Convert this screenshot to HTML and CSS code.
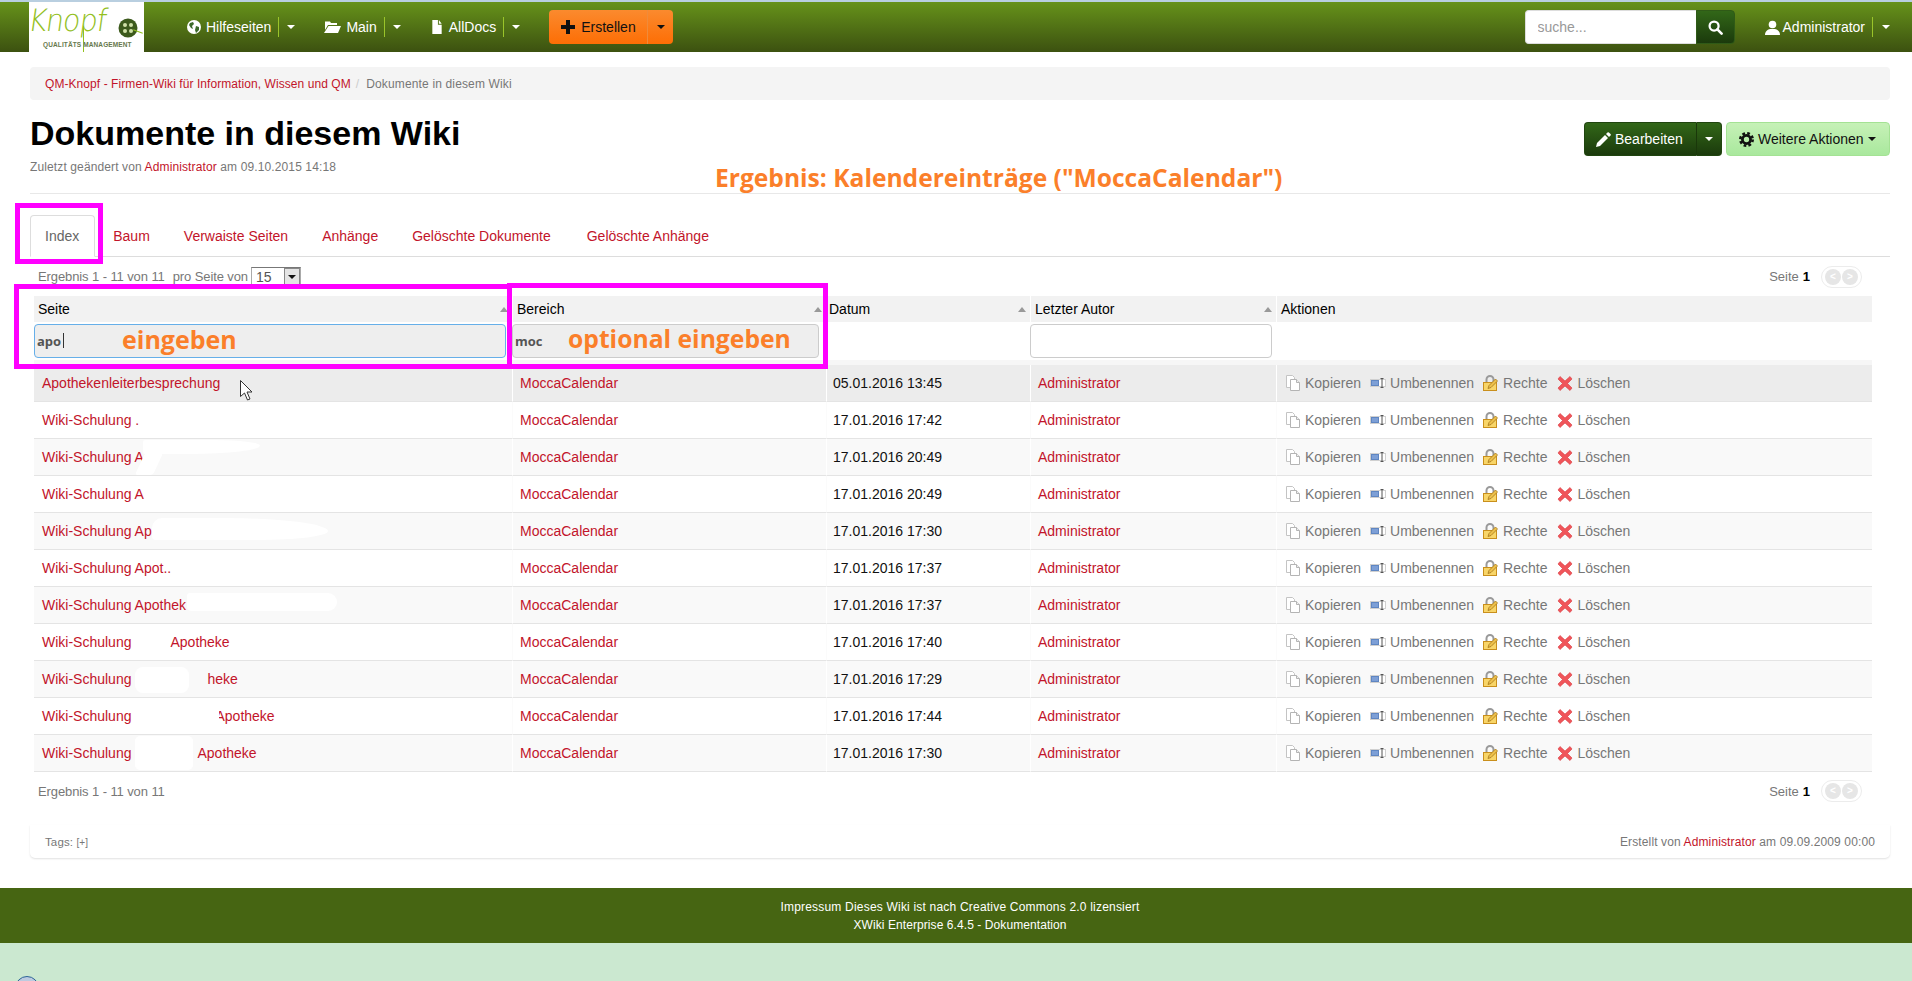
FILE: index.html
```html
<!DOCTYPE html>
<html lang="de">
<head>
<meta charset="utf-8">
<title>Dokumente in diesem Wiki</title>
<link rel="stylesheet" href="styles.css">
</head>
<body>
<svg class="sprite" aria-hidden="true">
  <symbol id="i-copy" viewBox="0 0 16 16"><path d="M1.500.5h6l2 2v10h-8z" fill="#fff" stroke="#c4c4c4"/><path d="M5.500 4.500h6l3 3v8h-9z" fill="#fff" stroke="#b4b4b4"/><path d="M11.500 4.500v3h3" fill="#eee" stroke="#b4b4b4"/></symbol>
  <symbol id="i-rename" viewBox="0 0 16 16"><rect x=".5" y="4.500" width="15" height="7" fill="#fff" stroke="#d0d0d0"/><rect x="1.500" y="5.500" width="7" height="5" fill="#7d9fd6" stroke="#5f86c2"/><path d="M10.500 3.500h3M12 3.500v9M10.500 12.500h3" fill="none" stroke="#555"/></symbol>
  <symbol id="i-lock" viewBox="0 0 16 16"><path d="M3.500 8V4.500a3.500 3.500 0 0 1 7 0V8" fill="none" stroke="#9a9a9a" stroke-width="2"/><rect x=".5" y="7.500" width="13" height="8" fill="#f8d568" stroke="#c98f1c"/><path d="M5 13.500l1-3 6.500-6.500 2 2-6.500 6.500z" fill="#edc04a" stroke="#a4761a" stroke-width=".8"/></symbol>
  <symbol id="i-cross" viewBox="0 0 16 16"><path d="M3 1.500L8 6l5-4.500 2 2.500-4.500 4.500 4.500 4.500-2 2.500L8 11l-5 4.500L1 13l4.500-4.500L1 4z" fill="#f0555a" stroke="#d93a3f" stroke-width=".6"/></symbol>
</svg>

<header class="topbar">
  <a class="logo">
    <span class="logo-word">Knopf</span>
    <svg class="logo-button" viewBox="0 0 20 20"><circle cx="10" cy="10" r="9.500" fill="#3c5a1c"/><circle cx="7" cy="7" r="2" fill="#cfe0a8"/><circle cx="13" cy="7" r="2" fill="#cfe0a8"/><circle cx="7" cy="13" r="2" fill="#cfe0a8"/><circle cx="13" cy="13" r="2" fill="#cfe0a8"/></svg>
    <span class="logo-sub">QUALITÄTS MANAGEMENT</span>
  </a>
  <nav class="nav">
    <a class="nav-item">
      <svg class="nav-ic" viewBox="0 0 14 14"><circle cx="7" cy="7" r="7" fill="#fff"/><path d="M3 3l3-1 1 2-2 2 1 3-2-1-2-3zM9 6l3 1 0 3-3 3-1-3z" fill="#3c6a2a"/></svg>
      <span>Hilfeseiten</span><i class="nav-div"></i><i class="caret"></i>
    </a>
    <a class="nav-item">
      <svg class="nav-ic nav-ic-wide" viewBox="0 0 17 14"><path d="M1 3V1.500h5l1 1.500h6v2H4L1 10z" fill="#fff"/><path d="M4.500 6H17l-3 7H0z" fill="#fff"/></svg>
      <span>Main</span><i class="nav-div"></i><i class="caret"></i>
    </a>
    <a class="nav-item">
      <svg class="nav-ic" viewBox="0 0 14 15"><path d="M2 0h6v5h4v10H2z" fill="#fff"/><path d="M9 0l3 4H9z" fill="#fff"/></svg>
      <span>AllDocs</span><i class="nav-div"></i><i class="caret"></i>
    </a>
  </nav>
  <div class="create">
    <a class="create-main"><svg class="plus" viewBox="0 0 14 14"><path d="M5 0h4v5h5v4H9v5H5V9H0V5h5z" fill="#111"/></svg>Erstellen</a>
    <a class="create-drop"><i class="caret caret-dark"></i></a>
  </div>
  <form class="search">
    <input class="search-input" type="text" placeholder="suche...">
    <button class="search-btn" type="button"><svg viewBox="0 0 16 16" class="search-ic"><circle cx="6.500" cy="6.500" r="4.800" fill="none" stroke="#fff" stroke-width="2.400"/><path d="M10 10l4.500 4.500" stroke="#fff" stroke-width="2.800" stroke-linecap="round"/></svg></button>
  </form>
  <a class="user">
    <svg class="nav-ic" viewBox="0 0 15 15"><circle cx="7.500" cy="4.500" r="3.800" fill="#fff"/><path d="M0 15c0-4 3-5.500 5-6h5c2 .5 5 2 5 6z" fill="#fff"/></svg>
    <span>Administrator</span><i class="nav-div"></i><i class="caret"></i>
  </a>
</header>

<main class="page">
  <ol class="crumbs">
    <li><a class="lnk">QM-Knopf - Firmen-Wiki für Information, Wissen und QM</a></li>
    <li class="crumb-sep">/</li>
    <li class="crumb-here">Dokumente in diesem Wiki</li>
  </ol>

  <section class="head">
    <div>
      <h1>Dokumente in diesem Wiki</h1>
      <p class="meta">Zuletzt geändert von <a class="lnk">Administrator</a> am 09.10.2015 14:18</p>
    </div>
    <div class="actions">
      <div class="edit-group">
        <a class="btn-dark btn-edit"><svg class="btn-ic" viewBox="0 0 15 15"><path d="M0 15l1-4 8-8 3 3-8 8z" fill="#fff"/><path d="M10 2l1.500-1.500a1 1 0 0 1 1.400 0l1.600 1.600a1 1 0 0 1 0 1.400L13 5z" fill="#fff"/></svg>Bearbeiten</a>
        <a class="btn-dark btn-drop"><i class="caret"></i></a>
      </div>
      <a class="btn-light"><svg class="btn-ic" viewBox="0 0 14 14"><circle cx="7" cy="7" r="3.800" fill="none" stroke="#111" stroke-width="2.600"/><circle cx="7" cy="7" r="5.800" fill="none" stroke="#111" stroke-width="2.400" stroke-dasharray="2.500 2.050"/></svg>Weitere Aktionen<i class="caret caret-dark caret-small"></i></a>
    </div>
  </section>

  <ul class="tabs">
    <li class="tab tab-on">Index</li>
    <li class="tab lnk">Baum</li>
    <li class="tab lnk">Verwaiste Seiten</li>
    <li class="tab lnk">Anhänge</li>
    <li class="tab lnk">Gelöschte Dokumente</li>
    <li class="tab lnk">Gelöschte Anhänge</li>
  </ul>

  <div class="pager pager-top">
    <div class="pager-l"><span>Ergebnis 1 - 11 von 11</span><span class="per">pro Seite von</span>
      <span class="sel"><span class="sel-v">15</span><span class="sel-b"><i class="caret caret-dark caret-small"></i></span></span>
    </div>
    <div class="pager-r">Seite <b>1</b>
      <span class="pgb"><span class="pgc">&lt;</span><span class="pgc">&gt;</span></span>
    </div>
  </div>

  <table class="grid">
    <colgroup><col class="c1"><col class="c2"><col class="c3"><col class="c4"><col class="c5"></colgroup>
    <thead>
      <tr class="hrow">
        <th>Seite<i class="sort"></i></th>
        <th>Bereich<i class="sort"></i></th>
        <th>Datum<i class="sort"></i></th>
        <th>Letzter Autor<i class="sort"></i></th>
        <th>Aktionen</th>
      </tr>
      <tr class="frow">
        <td><input class="fi fi-focus" type="text" value="apo"></td>
        <td><input class="fi fi-grey" type="text" value="moc"></td>
        <td></td>
        <td><input class="fi" type="text"></td>
        <td></td>
      </tr>
    </thead>
    <tbody>
      <tr class="row-hover">
        <td><a class="lnk">Apothekenleiterbesprechung</a></td><td><a class="lnk">MoccaCalendar</a></td><td>05.01.2016 13:45</td><td><a class="lnk">Administrator</a></td>
        <td class="acts"><span class="act a1"><svg class="ic"><use href="#i-copy"/></svg>Kopieren</span><span class="act a2"><svg class="ic"><use href="#i-rename"/></svg>Umbenennen</span><span class="act a3"><svg class="ic"><use href="#i-lock"/></svg>Rechte</span><span class="act"><svg class="ic"><use href="#i-cross"/></svg>Löschen</span></td>
      </tr>
      <tr>
        <td><a class="lnk">Wiki-Schulung .</a></td><td><a class="lnk">MoccaCalendar</a></td><td>17.01.2016 17:42</td><td><a class="lnk">Administrator</a></td>
        <td class="acts"><span class="act a1"><svg class="ic"><use href="#i-copy"/></svg>Kopieren</span><span class="act a2"><svg class="ic"><use href="#i-rename"/></svg>Umbenennen</span><span class="act a3"><svg class="ic"><use href="#i-lock"/></svg>Rechte</span><span class="act"><svg class="ic"><use href="#i-cross"/></svg>Löschen</span></td>
      </tr>
      <tr class="stripe">
        <td class="namecell"><a class="lnk">Wiki-Schulung A</a><i class="smear sm3"></i><i class="smear sm3b"></i></td><td><a class="lnk">MoccaCalendar</a></td><td>17.01.2016 20:49</td><td><a class="lnk">Administrator</a></td>
        <td class="acts"><span class="act a1"><svg class="ic"><use href="#i-copy"/></svg>Kopieren</span><span class="act a2"><svg class="ic"><use href="#i-rename"/></svg>Umbenennen</span><span class="act a3"><svg class="ic"><use href="#i-lock"/></svg>Rechte</span><span class="act"><svg class="ic"><use href="#i-cross"/></svg>Löschen</span></td>
      </tr>
      <tr>
        <td><a class="lnk">Wiki-Schulung A</a></td><td><a class="lnk">MoccaCalendar</a></td><td>17.01.2016 20:49</td><td><a class="lnk">Administrator</a></td>
        <td class="acts"><span class="act a1"><svg class="ic"><use href="#i-copy"/></svg>Kopieren</span><span class="act a2"><svg class="ic"><use href="#i-rename"/></svg>Umbenennen</span><span class="act a3"><svg class="ic"><use href="#i-lock"/></svg>Rechte</span><span class="act"><svg class="ic"><use href="#i-cross"/></svg>Löschen</span></td>
      </tr>
      <tr class="stripe">
        <td class="namecell"><a class="lnk">Wiki-Schulung Ap</a><i class="smear sm5"></i></td><td><a class="lnk">MoccaCalendar</a></td><td>17.01.2016 17:30</td><td><a class="lnk">Administrator</a></td>
        <td class="acts"><span class="act a1"><svg class="ic"><use href="#i-copy"/></svg>Kopieren</span><span class="act a2"><svg class="ic"><use href="#i-rename"/></svg>Umbenennen</span><span class="act a3"><svg class="ic"><use href="#i-lock"/></svg>Rechte</span><span class="act"><svg class="ic"><use href="#i-cross"/></svg>Löschen</span></td>
      </tr>
      <tr>
        <td><a class="lnk">Wiki-Schulung Apot..</a></td><td><a class="lnk">MoccaCalendar</a></td><td>17.01.2016 17:37</td><td><a class="lnk">Administrator</a></td>
        <td class="acts"><span class="act a1"><svg class="ic"><use href="#i-copy"/></svg>Kopieren</span><span class="act a2"><svg class="ic"><use href="#i-rename"/></svg>Umbenennen</span><span class="act a3"><svg class="ic"><use href="#i-lock"/></svg>Rechte</span><span class="act"><svg class="ic"><use href="#i-cross"/></svg>Löschen</span></td>
      </tr>
      <tr class="stripe">
        <td class="namecell"><a class="lnk">Wiki-Schulung Apothek</a><i class="smear sm7"></i></td><td><a class="lnk">MoccaCalendar</a></td><td>17.01.2016 17:37</td><td><a class="lnk">Administrator</a></td>
        <td class="acts"><span class="act a1"><svg class="ic"><use href="#i-copy"/></svg>Kopieren</span><span class="act a2"><svg class="ic"><use href="#i-rename"/></svg>Umbenennen</span><span class="act a3"><svg class="ic"><use href="#i-lock"/></svg>Rechte</span><span class="act"><svg class="ic"><use href="#i-cross"/></svg>Löschen</span></td>
      </tr>
      <tr>
        <td><a class="lnk">Wiki-Schulung<span class="gap g8">Apotheke</span></a></td><td><a class="lnk">MoccaCalendar</a></td><td>17.01.2016 17:40</td><td><a class="lnk">Administrator</a></td>
        <td class="acts"><span class="act a1"><svg class="ic"><use href="#i-copy"/></svg>Kopieren</span><span class="act a2"><svg class="ic"><use href="#i-rename"/></svg>Umbenennen</span><span class="act a3"><svg class="ic"><use href="#i-lock"/></svg>Rechte</span><span class="act"><svg class="ic"><use href="#i-cross"/></svg>Löschen</span></td>
      </tr>
      <tr class="stripe">
        <td class="namecell"><a class="lnk">Wiki-Schulung<span class="gap g9">heke</span></a><i class="smear sm9"></i></td><td><a class="lnk">MoccaCalendar</a></td><td>17.01.2016 17:29</td><td><a class="lnk">Administrator</a></td>
        <td class="acts"><span class="act a1"><svg class="ic"><use href="#i-copy"/></svg>Kopieren</span><span class="act a2"><svg class="ic"><use href="#i-rename"/></svg>Umbenennen</span><span class="act a3"><svg class="ic"><use href="#i-lock"/></svg>Rechte</span><span class="act"><svg class="ic"><use href="#i-cross"/></svg>Löschen</span></td>
      </tr>
      <tr>
        <td class="namecell"><a class="lnk">Wiki-Schulung<span class="gap g10">Apotheke</span></a><i class="smear sm10"></i></td><td><a class="lnk">MoccaCalendar</a></td><td>17.01.2016 17:44</td><td><a class="lnk">Administrator</a></td>
        <td class="acts"><span class="act a1"><svg class="ic"><use href="#i-copy"/></svg>Kopieren</span><span class="act a2"><svg class="ic"><use href="#i-rename"/></svg>Umbenennen</span><span class="act a3"><svg class="ic"><use href="#i-lock"/></svg>Rechte</span><span class="act"><svg class="ic"><use href="#i-cross"/></svg>Löschen</span></td>
      </tr>
      <tr class="stripe">
        <td class="namecell"><a class="lnk">Wiki-Schulung<span class="gap g11">Apotheke</span></a><i class="smear sm11"></i></td><td><a class="lnk">MoccaCalendar</a></td><td>17.01.2016 17:30</td><td><a class="lnk">Administrator</a></td>
        <td class="acts"><span class="act a1"><svg class="ic"><use href="#i-copy"/></svg>Kopieren</span><span class="act a2"><svg class="ic"><use href="#i-rename"/></svg>Umbenennen</span><span class="act a3"><svg class="ic"><use href="#i-lock"/></svg>Rechte</span><span class="act"><svg class="ic"><use href="#i-cross"/></svg>Löschen</span></td>
      </tr>
    </tbody>
  </table>

  <div class="pager pager-bottom">
    <div class="pager-l">Ergebnis 1 - 11 von 11</div>
    <div class="pager-r">Seite <b>1</b>
      <span class="pgb"><span class="pgc">&lt;</span><span class="pgc">&gt;</span></span>
    </div>
  </div>

  <div class="docfoot">
    <div class="tags">Tags: <span class="tags-add">[+]</span></div>
    <div class="created">Erstellt von <a class="lnk">Administrator</a> am 09.09.2009 00:00</div>
  </div>
</main>

<footer class="foot">
  <div class="foot-1">Impressum Dieses Wiki ist nach Creative Commons 2.0 lizensiert</div>
  <div class="foot-2">XWiki Enterprise 6.4.5 - Dokumentation</div>
</footer>
<div class="base"><i class="base-disc"></i></div>

<!-- annotations drawn on top of the screenshot -->
<div class="note note-title">Ergebnis: Kalendereinträge ("MoccaCalendar")</div>
<div class="note note-a">eingeben</div>
<div class="note note-b">optional eingeben</div>
<i class="frame frame-index"></i>
<i class="frame frame-seite"></i>
<i class="frame frame-bereich"></i>
<i class="textcaret"></i>
<svg class="pointer" viewBox="0 0 13 21"><path d="M.5.500v16l4-3.500 3 7 2.500-1-3-7h5z" fill="#fff" stroke="#333"/></svg>
</body>
</html>
```

FILE: styles.css
```css
* { box-sizing: border-box; }
html, body { margin: 0; height: 981px; overflow: hidden; }
body { font-family: "Liberation Sans", Arial, sans-serif; font-size: 14px; color: #111; background: #fff; position: relative; }
.sprite { display: none; }
a { text-decoration: none; color: inherit; }
i { font-style: normal; }
.lnk { color: #c2142a; }

/* top bar */
.topbar { height: 52px; border-top: 2px solid #b9cfe0; background: linear-gradient(#66921a, #3c5110); display: flex; align-items: center; padding: 0 22px 0 29px; color: #fff; }
.logo { width: 115px; height: 50px; background: #fff; position: relative; flex: none; }
.logo::before { content: ""; position: absolute; left: 54px; top: 24px; width: 1px; height: 26px; background: #93c01f; }
.logo::after { content: ""; position: absolute; left: 104px; top: 29px; width: 10px; height: 1px; background: #93c01f; transform: rotate(20deg); }
.logo-word { position: absolute; left: 2px; top: 0; font-family: "DejaVu Sans", sans-serif; font-weight: 200; font-size: 31px; line-height: 36px; color: #93c01f; transform: skewX(-8deg) scaleX(.92); transform-origin: left top; letter-spacing: -1px; }
.logo-button { position: absolute; left: 89px; top: 16px; width: 20px; height: 20px; }
.logo-sub { position: absolute; left: 14px; top: 38px; font-size: 6.500px; line-height: 9px; font-weight: bold; color: #67794d; letter-spacing: .12px; white-space: nowrap; }
.nav { display: flex; margin-left: 43px; }
.nav-item { display: flex; align-items: center; margin-right: 29px; }
.nav-ic { width: 14px; height: 14px; margin-right: 5px; flex: none; }
.nav-ic-wide { width: 17px; }
.nav-div { width: 1px; height: 20px; background: #9ac42a; margin: 0 8px 0 7px; }
.caret { width: 0; height: 0; border-top: 4px solid #fff; border-left: 4px solid transparent; border-right: 4px solid transparent; display: inline-block; }
.caret-dark { border-top-color: #111; }
.caret-small { border-width: 4px 4px 0; vertical-align: middle; }

.create { display: flex; height: 34px; color: #111; }
.create-main { width: 99px; display: flex; align-items: center; padding-left: 12px; background: linear-gradient(#fb8a2e, #fd6e05); border-radius: 4px 0 0 4px; border-right: 1px solid #f08b3a; }
.plus { width: 14px; height: 14px; margin-right: 6px; }
.create-drop { width: 25px; display: flex; align-items: center; justify-content: center; background: linear-gradient(#fb8a2e, #fd6e05); border-radius: 0 4px 4px 0; }

.search { display: flex; margin-left: auto; height: 34px; }
.search-input { width: 171px; height: 34px; border: 1px solid #ddd; border-right: 0; border-radius: 4px 0 0 4px; padding: 0 12px; font: 14px "Liberation Sans", Arial, sans-serif; background: #fff; }
.search-input::placeholder { color: #999; }
.search-btn { width: 39px; height: 34px; border: 1px solid #2f5a17; border-radius: 0 4px 4px 0; background: linear-gradient(#326718, #1b3a0c); padding: 0; display: flex; align-items: center; justify-content: center; }
.search-ic { width: 15px; height: 15px; }
.user { display: flex; align-items: center; margin-left: 30px; }
.user .nav-ic { width: 15px; height: 15px; margin-right: 3px; }
.user .nav-div { margin: 0 9px 0 7px; }

/* page */
.page { padding: 15px 22px 0 30px; height: 836px; }
.crumbs { list-style: none; margin: 0; padding: 0 15px; height: 33px; background: #f4f4f4; border-radius: 4px; display: flex; align-items: center; font-size: 12px; letter-spacing: .07px; color: #777; }
.crumb-sep { color: #ccc; margin: 0 7px 0 5px; }
.crumb-here { letter-spacing: .15px; }
.head { display: flex; justify-content: space-between; height: 94px; border-bottom: 1px solid #e8e8e8; padding-top: 14px; }
h1 { font-size: 34px; line-height: 39px; margin: 0; color: #000; }
.meta { margin: 7px 0 0; font-size: 12px; letter-spacing: .12px; color: #777; }
.actions { display: flex; gap: 4px; padding-top: 8px; height: 42px; }
.edit-group { display: flex; height: 34px; }
.btn-dark { display: flex; align-items: center; background: linear-gradient(#326718, #1b3a0c); color: #fff; border: 1px solid #20450f; }
.btn-edit { width: 113px; padding-left: 11px; border-radius: 4px 0 0 4px; border-right-color: #1a380a; }
.btn-drop { width: 25px; justify-content: center; border-left: 0; border-radius: 0 4px 4px 0; }
.btn-ic { width: 15px; height: 15px; margin-right: 4px; flex: none; }
.btn-light { display: flex; align-items: center; width: 164px; height: 34px; padding-left: 12px; background: linear-gradient(#c6f1b7, #a9e89d); border: 1px solid #a4e294; border-radius: 4px; color: #111; }
.btn-light .caret { margin-left: 4px; }

.tabs { list-style: none; margin: 21px 0 0; padding: 0; display: flex; height: 42px; border-bottom: 1px solid #ddd; }
.tab { height: 42px; padding: 0 15px; border: 1px solid transparent; margin-right: 2px; display: flex; align-items: center; }
.tab:last-child { margin-left: 2px; }
.tab-on { padding: 0 15px 0 14px; border-color: #ddd #ddd #fff; border-radius: 4px 4px 0 0; color: #666; background: #fff; }

.pager { display: flex; justify-content: space-between; font-size: 13px; color: #777; margin: 0 28px 0 8px; align-items: center; }
.pager-top { height: 39px; }
.pager-bottom { height: 38px; }
.pager-l { display: flex; align-items: center; white-space: nowrap; letter-spacing: -.1px; }
.per { margin-left: 8px; }
.pager-r { display: flex; align-items: center; gap: 4px; }
.pager-r b { color: #000; }
.sel { display: inline-flex; width: 50px; height: 20px; border: 1px solid #aaa; border-top-color: #777; background: #fff; margin-left: 3px; }
.sel-v { flex: 1; padding-left: 4px; font-size: 14px; line-height: 18px; color: #555; }
.sel-b { width: 16px; background: #e4e4e4; border: 1px solid #888; display: flex; align-items: center; justify-content: center; }
.pgb { display: flex; margin-left: 7px; border: 1px solid #ececec; border-radius: 11px; padding: 2px 3px; gap: 1px; }
.pgc { width: 16px; height: 16px; border-radius: 50%; background: #e6e6e6; color: #fff; font-size: 10px; line-height: 15px; text-align: center; font-weight: bold; }

/* table */
.grid { table-layout: fixed; border-collapse: separate; border-spacing: 0; width: 1838px; margin-left: 4px; }
.c1 { width: 478px; } .c2 { width: 314px; } .c3 { width: 204px; } .c4 { width: 246px; } .c5 { width: 596px; }
.hrow th { height: 26px; background: #f2f2f2; font-weight: normal; font-size: 14px; color: #000; text-align: left; padding: 0 0 0 4px; position: relative; border-left: 1px solid #fff; }
.hrow th:first-child { border-left: 0; }
.hrow th:nth-child(3) { padding-left: 2px; }
.sort { position: absolute; right: 4px; top: 11px; width: 0; height: 0; border-bottom: 5px solid #999; border-left: 4px solid transparent; border-right: 4px solid transparent; }
.frow td { height: 43px; padding: 2px 0; border-bottom: 5px solid #f6f6f6; }
.fi { display: block; height: 34px; border: 1px solid #ccc; border-radius: 4px; padding: 0 2px; font: bold 13px "Open Sans", sans-serif; color: #555; background: #fff; }
.frow td:first-child .fi { width: 472px; }
.frow td:nth-child(2) .fi { width: 307px; }
.frow td:nth-child(4) .fi { width: 242px; }
.fi-focus { background: #eee; border-color: #66afe9; }
.fi-grey { background: #eee; }
tbody td { height: 37px; padding: 0 0 0 7px; border-bottom: 1px solid #e4e4e4; border-left: 1px solid #fbfbfb; color: #111; white-space: nowrap; }
tbody td:first-child { border-left: 0; padding-left: 8px; }
tbody td:nth-child(3) { padding-left: 6px; }
.row-hover td { background: #ececec; border-left-color: #fff; }
.stripe td { background: #f9f9f9; border-left-color: #fff; }
.namecell { position: relative; }
.gap { display: inline-block; }
.g8 { margin-left: 39px; } .g9 { margin-left: 76px; } .g10 { margin-left: 84px; } .g11 { margin-left: 66px; }
.smear { position: absolute; background: #fff; display: block; }
.sm3 { left: 109px; top: 1px; width: 117px; height: 14px; border-radius: 2px 40% 60% 2px; }
.sm3b { left: 106px; top: 14px; width: 18px; height: 22px; transform: skewX(-25deg); border-radius: 3px; }
.sm5 { left: 118px; top: 5px; width: 176px; height: 22px; border-radius: 10px 60% 40% 4px; }
.sm7 { left: 153px; top: 6px; width: 150px; height: 18px; border-radius: 4px 12px 12px 6px; }
.sm9 { left: 101px; top: 6px; width: 54px; height: 26px; border-radius: 8px; }
.sm10 { left: 101px; top: 4px; width: 84px; height: 28px; }
.sm11 { left: 101px; top: 1px; width: 58px; height: 34px; border-radius: 5px; }
.acts { padding: 2px 0 0 8px !important; color: #777 !important; }
.act { display: inline-flex; align-items: center; }
.ic { width: 16px; height: 16px; margin-right: 4px; flex: none; }
.a1 { margin-right: 9px; } .a2 { margin-right: 9px; } .a3 { margin-right: 10px; }

.docfoot { display: flex; justify-content: space-between; align-items: center; height: 33px; margin-top: 15px; padding: 0 15px; font-size: 12px; letter-spacing: .12px; color: #777; background: #fff; border-radius: 0 0 5px 5px; box-shadow: 0 1px 2px rgba(0,0,0,.12); }
.tags { font-size: 11.500px; }
.tags-add { font-size: 10px; }

.foot { height: 55px; background: #466512; color: #fff; font-size: 12px; line-height: 18px; text-align: center; padding: 10px 0 0 8px; }
.foot-1 { letter-spacing: .2px; }
.foot-2 { letter-spacing: .08px; }
.base { height: 38px; background: #cbe8d0; position: relative; overflow: hidden; }
.base-disc { position: absolute; left: 15px; top: 33px; width: 24px; height: 24px; border-radius: 50%; border: 1px solid #2c6496; background: #bccbe0; }

/* annotations */
.note { position: absolute; font-family: "Open Sans", sans-serif; font-weight: bold; color: #fb7f2a; white-space: nowrap; line-height: 1; }
.note-title { left: 715px; top: 166px; font-size: 24.600px; }
.note-a { left: 122px; top: 327px; font-size: 25px; }
.note-b { left: 568px; top: 327px; font-size: 24.700px; }
.frame { position: absolute; border: 5px solid #ff00ff; display: block; }
.frame-index { left: 15px; top: 203px; width: 88px; height: 61px; }
.frame-seite { left: 14px; top: 284px; width: 498px; height: 85px; }
.frame-bereich { left: 507px; top: 283px; width: 321px; height: 86px; }
.textcaret { position: absolute; left: 63px; top: 333px; width: 1px; height: 15px; background: #333; }
.pointer { position: absolute; left: 240px; top: 380px; width: 13px; height: 21px; }
```
